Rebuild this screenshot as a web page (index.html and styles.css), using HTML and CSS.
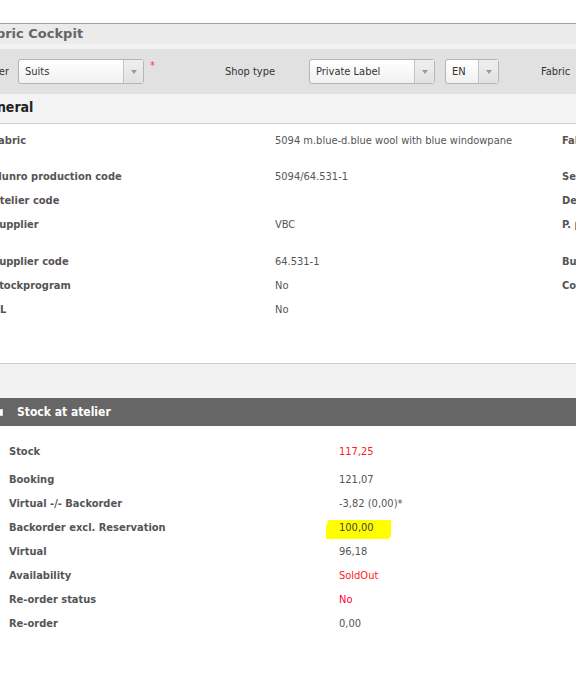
FILE: index.html
```html
<!DOCTYPE html>
<html>
<head>
<meta charset="utf-8">
<link rel="stylesheet" href="styles.css">
</head>
<body>
<div class="viewport">
  <div class="page">
    <div class="title">Fabric Cockpit</div>
    <div class="strip"></div>
    <div class="toolbar">
      <span class="tb-label first">Order</span>
      <div class="select w-suits"><span class="sel-text">Suits</span><span class="sel-arrow"></span></div>
      <span class="req">*</span>
      <span class="tb-label shop">Shop type</span>
      <div class="select w-pl"><span class="sel-text">Private Label</span><span class="sel-arrow"></span></div>
      <div class="select w-en"><span class="sel-text">EN</span><span class="sel-arrow"></span></div>
      <span class="tb-label fabric">Fabric</span>
    </div>
    <div class="section-head">General</div>
    <div class="general">
      <div class="row tall"><span class="lbl">Fabric</span><span class="val">5094 m.blue-d.blue wool with blue windowpane</span><span class="lbl">Fabric type</span></div>
      <div class="row"><span class="lbl">Munro production code</span><span class="val">5094/64.531-1</span><span class="lbl">Season</span></div>
      <div class="row"><span class="lbl">Atelier code</span><span class="val"></span><span class="lbl">Design</span></div>
      <div class="row tall2"><span class="lbl">Supplier</span><span class="val">VBC</span><span class="lbl">P. price</span></div>
      <div class="row"><span class="lbl">Supplier code</span><span class="val">64.531-1</span><span class="lbl">Bunch</span></div>
      <div class="row"><span class="lbl">Stockprogram</span><span class="val">No</span><span class="lbl">Composition</span></div>
      <div class="row"><span class="lbl">UL</span><span class="val">No</span><span class="lbl"></span></div>
    </div>
    <div class="gap-band"></div>
    <div class="stock-head"><span class="sq"></span>Stock at atelier</div>
    <div class="stock">
      <div class="srow first"><span class="slbl">Stock</span><span class="sval red">117,25</span></div>
      <div class="srow"><span class="slbl">Booking</span><span class="sval">121,07</span></div>
      <div class="srow"><span class="slbl">Virtual -/- Backorder</span><span class="sval">-3,82 (0,00)*</span></div>
      <div class="srow"><span class="slbl">Backorder excl. Reservation</span><span class="sval hl"><span class="mark"></span><span class="hl-text">100,00</span></span></div>
      <div class="srow"><span class="slbl">Virtual</span><span class="sval">96,18</span></div>
      <div class="srow"><span class="slbl">Availability</span><span class="sval red">SoldOut</span></div>
      <div class="srow"><span class="slbl">Re-order status</span><span class="sval red2">No</span></div>
      <div class="srow"><span class="slbl">Re-order</span><span class="sval">0,00</span></div>
    </div>
  </div>
</div>
</body>
</html>
```
FILE: styles.css
```css
html, body {
  margin: 0;
  padding: 0;
  background: #fff;
}
body {
  font-family: "DejaVu Sans Condensed", "DejaVu Sans", Verdana, sans-serif;
  font-size: 11px;
  color: #555;
}
.viewport {
  width: 576px;
  height: 695px;
  overflow: hidden;
}
.page {
  margin-left: -20px;
  width: 700px;
  padding-top: 23px;
}
.title {
  border-top: 1px solid #a0a0a0;
  background: #ebebeb;
  height: 20px;
  line-height: 20px;
  padding-left: 0;
  text-indent: -1px;
  font-family: "DejaVu Sans", Verdana, sans-serif;
  font-weight: bold;
  font-size: 13px;
  color: #666;
  white-space: nowrap;
}
.strip {
  height: 5px;
  background: #f3f3f3;
}
.toolbar {
  height: 45px;
  background: #e1e1e1;
  display: flex;
  align-items: center;
  color: #333;
}
.tb-label.first {
  width: 29px;
  text-align: right;
  margin-right: 9px;
  overflow: hidden;
  white-space: nowrap;
  direction: rtl;
}
.select {
  display: flex;
  height: 23px;
  border: 1px solid #b5b5b5;
  border-radius: 3px;
  background: linear-gradient(#ffffff, #f1f1f1);
  box-sizing: content-box;
}
.sel-text {
  flex: 1;
  line-height: 24px;
  padding-left: 6px;
  color: #333;
}
.sel-arrow {
  width: 19px;
  border-left: 1px solid #c4c4c4;
  background: linear-gradient(#efefef, #e2e2e2);
  position: relative;
}
.sel-arrow::after {
  content: "";
  position: absolute;
  left: 7px;
  top: 10px;
  border-left: 3px solid transparent;
  border-right: 3px solid transparent;
  border-top: 4px solid #999;
}
.w-suits { width: 124px; }
.w-pl { width: 124px; margin-left: 0; }
.w-en { width: 52px; margin-left: 10px; }
.req {
  color: #ff3366;
  font-size: 11px;
  align-self: flex-start;
  margin-top: 10px;
  margin-left: 6px;
}
.tb-label.shop {
  margin-left: 70px;
  width: 84px;
}
.tb-label.fabric {
  margin-left: 42px;
}
.section-head {
  height: 29px;
  line-height: 26px;
  background: #f3f3f3;
  border-bottom: 1px solid #cfcfcf;
  padding-left: 0;
  text-indent: -2px;
  font-weight: bold;
  font-size: 14px;
  color: #222;
  white-space: nowrap;
}
.general {
  padding-top: 4px;
  height: 235px;
  border-bottom: 1px solid #cfcfcf;
}
.row {
  display: grid;
  grid-template-columns: 283px 287px 1fr;
  height: 24px;
  line-height: 22px;
  padding-top: 2px;
  box-sizing: border-box;
  padding-left: 12px;
  white-space: nowrap;
}
.row.tall { height: 36px; }
.row.tall2 { height: 37px; }
.lbl {
  font-weight: bold;
  color: #555;
}
.val {
  color: #555;
}
.gap-band {
  height: 34px;
  background: #f2f2f2;
}
.stock-head {
  height: 28px;
  line-height: 27px;
  background: #666;
  color: #fff;
  font-weight: bold;
  font-size: 12px;
  display: flex;
  align-items: center;
  padding-left: 16px;
}
.sq {
  width: 7px;
  height: 7px;
  background: #fff;
  border: 1px solid #ddd;
  box-sizing: border-box;
  margin-right: 14px;
}
.stock {
  padding-top: 13px;
  padding-left: 29px;
}
.srow {
  display: grid;
  grid-template-columns: 330px 1fr;
  height: 24px;
  line-height: 22px;
  padding-top: 2px;
  box-sizing: border-box;
  white-space: nowrap;
}
.srow.first { height: 28px; }
.slbl {
  font-weight: bold;
  color: #555;
}
.sval { color: #555; }
.sval.red { color: #ff1a1a; }
.sval.red2 { color: #ff0033; }
.hl {
  position: relative;
}
.mark {
  position: absolute;
  left: -13px;
  top: 3px;
  width: 65px;
  height: 19px;
  background: #ffff00;
  clip-path: polygon(4% 0, 100% 0, 100% 85%, 96% 100%, 0 100%, 0 30%);
}
.hl-text {
  position: relative;
  color: #444;
}
```
